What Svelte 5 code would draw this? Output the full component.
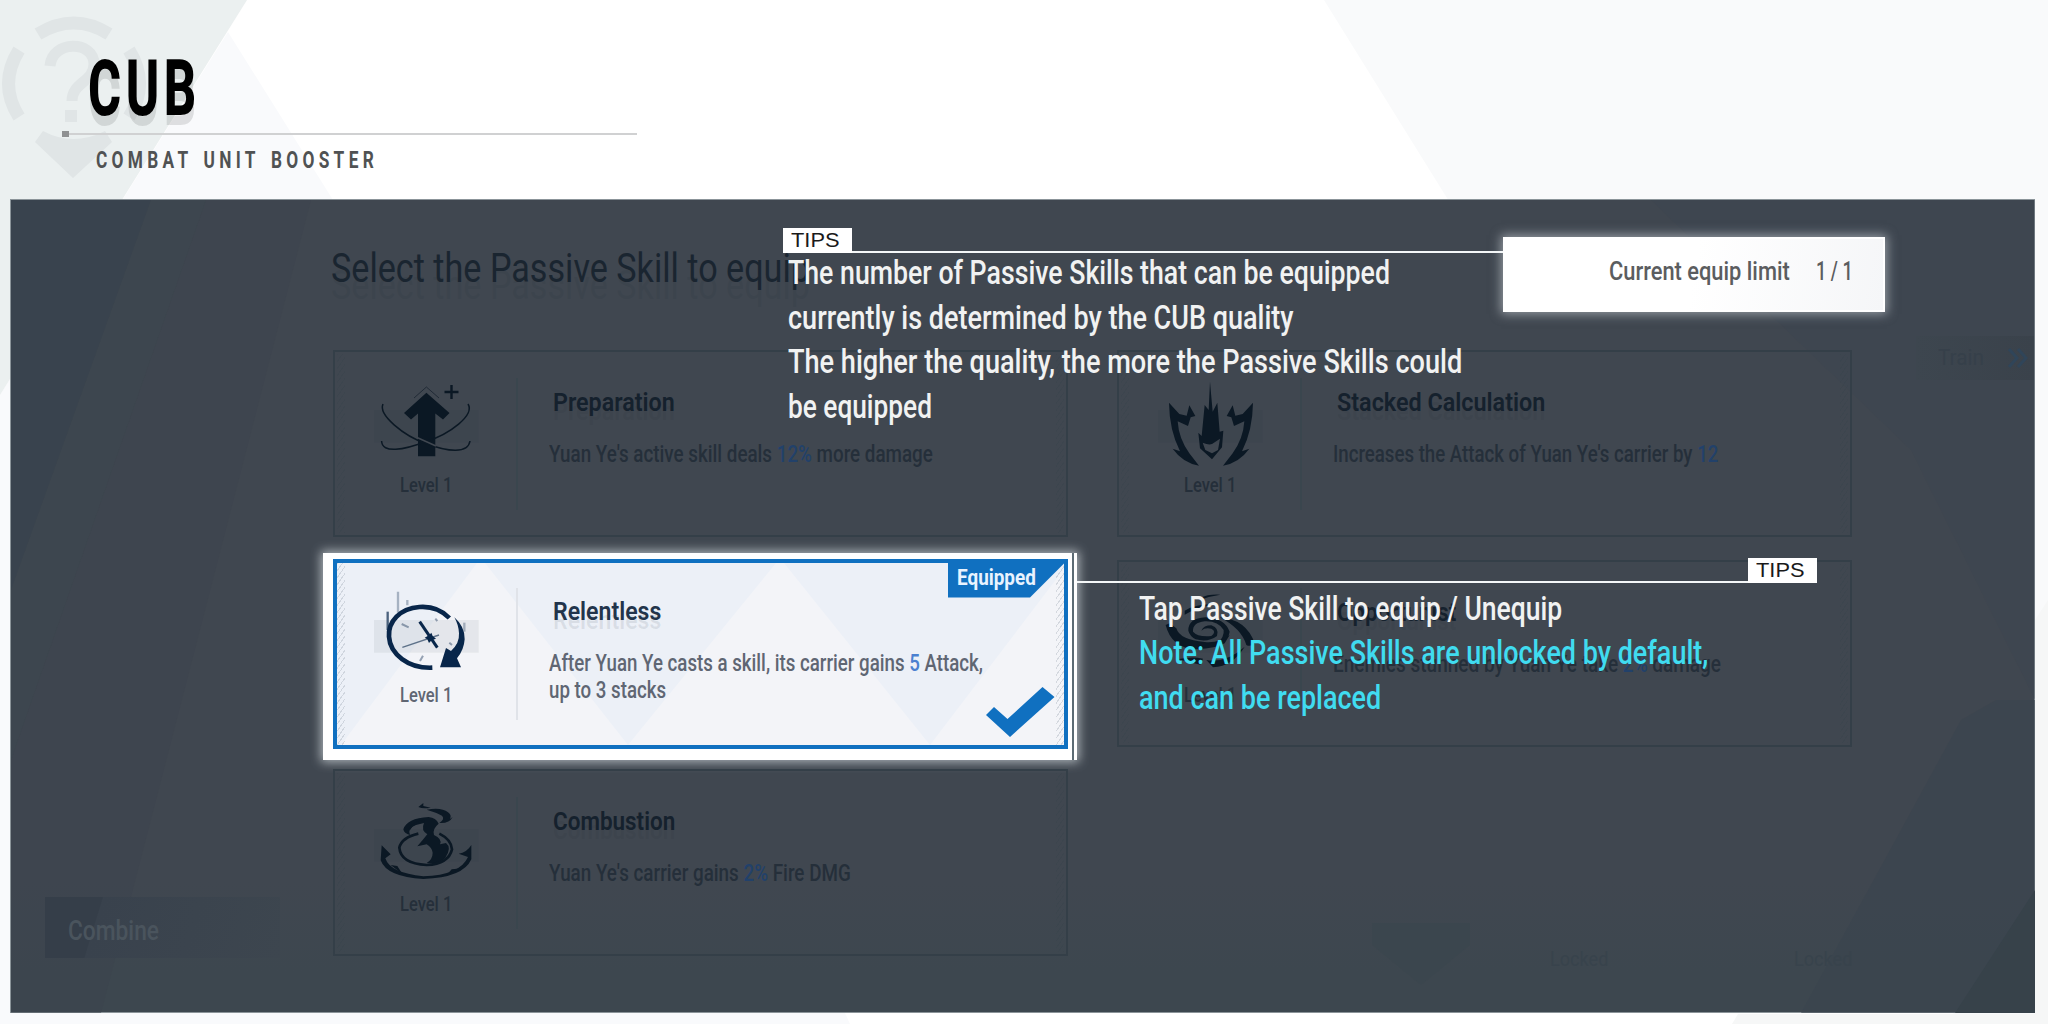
<script>
  const skills = [
    { name: 'Preparation', nameW: 122, icon: 'arrow', lines: [{ w: 384, parts: ["Yuan Ye's active skill deals ", '12%', ' more damage'] }] },
    { name: 'Stacked Calculation', nameW: 208, icon: 'claw', lines: [{ w: 385, parts: ["Increases the Attack of Yuan Ye's carrier by ", '12', ''] }] },
    {
      name: 'Relentless', nameW: 108, icon: 'clock', active: true,
      lines: [
        { w: 434, parts: ['After Yuan Ye casts a skill, its carrier gains ', '5', ' Attack,'] },
        { w: 117, parts: ['up to 3 stacks', '', ''] }
      ]
    },
    { name: 'Opportunist', nameW: 119, icon: 'swirl', lines: [{ w: 388, parts: ['Enemies stunned by Yuan Ye take ', '2%', ' damage'] }] },
    { name: 'Combustion', nameW: 122, icon: 'flame', lines: [{ w: 302, parts: ["Yuan Ye's carrier gains ", '2%', ' Fire DMG'] }] }
  ];

  const limitTip = [
    { w: 602, text: 'The number of Passive Skills that can be equipped' },
    { w: 506, text: 'currently is determined by the CUB quality' },
    { w: 674, text: 'The higher the quality, the more the Passive Skills could' },
    { w: 144, text: 'be equipped' }
  ];
  const tapTip = [
    { w: 423, text: 'Tap Passive Skill to equip / Unequip' },
    { w: 569, text: 'Note: All Passive Skills are unlocked by default,', note: true },
    { w: 242, text: 'and can be replaced', note: true }
  ];

  // Condenses a label horizontally to the given width.
  function fit(node, width) {
    node.style.transform = `scaleX(${width / node.offsetWidth})`;
  }
</script>

{#snippet icon(kind)}
  <svg class="icon" viewBox="0 0 420 300" width="140" height="100">
    <rect class="plate" x="42" y="120" width="314" height="98" />
    {#if kind === 'arrow'}
      <g transform="scale(3)">
        <path d="M66.4 22.8 89.5 43 83 49.5 75.3 43.5V86.2H58V43.5L51 49.5 44 43Z" />
        <path class="line" stroke-width="1" d="M54 28 66.4 17 79 28" opacity=".6" />
        <path class="line" stroke-width="2.4" d="M91.500 15v14M84.500 22h14" />
        <path class="line" stroke-width="1.5" d="M23 34C18 45 44 66 66 73.500C88 82 108 84 110 71M108 34C115 45 90 64 66 71.500C44 80 22 84 21.600 71" />
        <path class="cut" d="M57 67.500 76 76" />
      </g>
    {:else if kind === 'claw'}
      <g transform="translate(-42 0)">
        <path fill-rule="evenodd" d="M240 35 248 125 262 98 269 185 280 182 276 232 246 268 210 235 205 188 215 198 224 105 236 120ZM218 218Q236 226 246 222L270 206 264 240 246 250 226 240Z" />
        <path d="M117 98 148 132 170 137 178 106 196 138 182 142 174 168 143 154Q146 205 178 250L207 287Q158 278 128 236L150 244Q118 180 117 98Z" />
        <path transform="translate(486 0) scale(-1 1)" d="M117 98 148 132 170 137 178 106 196 138 182 142 174 168 143 154Q146 205 178 250L207 287Q158 278 128 236L150 244Q118 180 117 98Z" />
      </g>
    {:else if kind === 'clock'}
      <g class="faint">
        <path class="line" stroke-width="7" d="M114 35V98M142 60V76" />
        <path class="line" stroke-width="7" d="M313 128V155" />
      </g>
      <path class="line" stroke-width="7" d="M83 95V150" opacity=".7" />
      <path class="line" stroke-width="14" d="M268 114C240 85 205 79 178 81C120 85 84 125 87 170C90 222 145 266 217 263" />
      <path d="M283 112Q315 140 314 178Q312 210 291 235L303 262H240L258 204 273 213Q299 190 297 160Q296 135 283 112Z" />
      <path class="line" stroke-width="9" d="M179 125 232 203" />
      <path d="M194 173 207 166 214 158 218 168 228 176 215 181 207 189 202 178Z" />
      <path class="line" stroke-width="4" d="M127 202 237 165" opacity=".6" />
      <path class="line" stroke-width="6" d="M125 132 146 142M189 227 180 243M226 116 232 123M268 188 276 195" opacity=".4" />
    {:else if kind === 'swirl'}
      <g transform="translate(-43 0)">
        <path d="M108 135Q125 205 200 208Q260 205 285 190L300 165Q270 190 225 186Q150 180 140 145L120 130Z" />
        <path d="M176 152Q175 115 228 112Q285 115 300 155Q298 180 262 192Q285 170 282 150Q265 122 225 124Q188 128 190 155Q205 172 245 168Q262 155 245 146Q225 142 215 152Q222 136 245 136Q270 145 262 168Q235 188 198 178Q180 168 176 152Z" />
        <path d="M270 112Q350 118 375 190 362 202 350 195Q335 145 270 112Z" />
        <path d="M165 92Q200 70 262 72Q205 80 165 104ZM212 54Q235 42 272 44Q240 48 212 60Z" />
        <path d="M145 238Q185 228 220 236L212 254ZM230 240Q290 250 345 200Q310 258 250 262Z" />
      </g>
    {:else}
      <g transform="translate(0 16)">
        <path d="M175 38 190 26V35L212 40Q190 45 175 38ZM200 46Q245 38 264 54Q276 62 270 74L278 68Q268 88 238 86Q256 74 246 64Q228 54 200 46Z" />
        <path d="M206 68Q140 72 130 105Q132 118 150 122Q142 100 168 92L192 86Q182 108 202 120Q190 135 172 156L200 150Q216 160 218 175Q218 195 200 206Q235 212 256 190Q276 160 258 146L240 150Q248 134 222 122Q216 104 236 88Q228 70 206 68Z" />
        <path class="line" stroke-width="8" d="M175 118Q125 130 118 160Q122 208 200 212Q266 208 276 165Q274 136 238 118" />
        <path class="line" stroke-width="5" d="M194 78Q158 84 148 106" />
        <path d="M65 153 92 180 76 192Q90 236 190 246Q300 242 324 188L296 178Q320 175 334 152V195Q310 250 190 254Q80 248 62 198Z" />
        <path d="M92 212 112 215 128 240ZM262 240 275 225 308 222Z" />
      </g>
    {/if}
  </svg>
{/snippet}

<div class="page">
  <svg class="backdrop" viewBox="0 0 2048 1024" width="2048" height="1024">
    <path fill="#f9fafc" d="M228 32 333 200V1024H0V395Z" />
    <path fill="#ebf0f0" d="M0 0H247L0 395Z" />
    <path fill="#f9fafb" d="M1324 0H2048V1024H1960Z" />
    <path fill="#f9fafc" d="M0 1013H845L850 1024H0Z" />
    <path fill="#f6f7f7" d="M2035 620 2048 600V1024H1732L1738 1014H2035Z" />
    <g fill="none" stroke="#e0e5e6" stroke-width="13">
      <path d="M38 34Q74 12 109 34" />
      <path d="M19 50Q-2 84 19 117M129 50Q150 84 129 117" />
      <path d="M50 66C52 40 94 40 94 64C94 82 72 82 72 101" stroke-width="11" />
    </g>
    <path fill="#e0e5e6" d="M65 110H77V122H65ZM43 131Q73 147 105 131L112 142 73 178 35 142Z" />
  </svg>

  <header>
    <h1><span class="fit" use:fit={113}>CUB</span></h1>
    <div class="rule"><i></i></div>
    <p><span class="fit" use:fit={282}>COMBAT UNIT BOOSTER</span></p>
  </header>

  <main>
    <svg class="facets" viewBox="0 0 2024 813" width="2024" height="813">
      <path fill="#35414c" opacity=".6" d="M0 0H140L0 390Z" />
      <path fill="#39464e" opacity=".5" d="M140 0H195L0 560V390Z" />
      <path fill="#3c444e" opacity=".5" d="M195 0H300L90 813H0V560Z" />
      <path fill="#3b464f" opacity=".35" d="M1640 0H2024V500L1900 250Z" />
      <path fill="#3b454e" opacity=".6" d="M1950 520 1985 500H2024V813H1790Z" />
      <path fill="#37424a" d="M2024 690V813H1944Z" />
      <path fill="#3b464e" opacity=".8" d="M1361 723H1459V745L1410 785 1361 745Z" />
    </svg>

    <h2><span class="fit" use:fit={479}>Select the Passive Skill to equip</span></h2>

    <section class="grid">
      {#each skills as skill}
        <article class="card" class:active={skill.active}>
          {#if skill.active}
            <svg class="pattern" viewBox="0 0 735 190" width="735" height="190">
              <path fill="#f3f4f8" d="M144 4H152L295 186H8ZM443 4H451L597 186H295ZM731 10V186H597Z" />
            </svg>
          {/if}
          <i class="hatch"></i>
          <div class="badge">
            {@render icon(skill.icon)}
            <div class="level"><span class="fit" use:fit={52}>Level 1</span></div>
          </div>
          <div class="body">
            <h3><span class="fit" use:fit={skill.nameW}>{skill.name}</span></h3>
            {#each skill.lines as line}
              <div class="desc"><span class="fit" use:fit={line.w}>{line.parts[0]}<b>{line.parts[1]}</b>{line.parts[2]}</span></div>
            {/each}
          </div>
          <i class="hatch right"></i>
          {#if skill.active}
            <div class="tag"><span class="fit" use:fit={79}>Equipped</span></div>
            <svg class="check" viewBox="0 0 70 52" width="70" height="52">
              <path d="M0 29 8 21 21.500 33 56.500 1 68.500 11 24 51Z" />
            </svg>
          {/if}
        </article>
      {/each}
    </section>

    <div class="combine"><span class="fit" use:fit={91}>Combine</span></div>
    <div class="train">
      <span class="fit" use:fit={46}>Train</span>
      <svg viewBox="0 0 20 20" width="20" height="20"><path d="M1 1 9 10 1 19M10 1 18 10 10 19" /></svg>
    </div>
    <div class="locked one"><span class="fit" use:fit={58}>Locked</span></div>
    <div class="locked two"><span class="fit" use:fit={58}>Locked</span></div>

    <div class="limit">
      <div class="label"><span class="fit" use:fit={181}>Current equip limit</span></div>
      <div class="count"><span class="fit" use:fit={37}>1 / 1</span></div>
    </div>

    <aside class="tip first">
      <div class="bar"><div class="chip"><span class="fit" use:fit={48}>TIPS</span></div><i></i></div>
      {#each limitTip as line}
        <div class="row"><span class="fit" use:fit={line.w}>{line.text}</span></div>
      {/each}
    </aside>

    <aside class="tip second">
      <div class="bar"><i></i><div class="chip"><span class="fit" use:fit={48}>TIPS</span></div></div>
      {#each tapTip as line}
        <div class="row" class:note={line.note}><span class="fit" use:fit={line.w}>{line.text}</span></div>
      {/each}
    </aside>
  </main>
</div>

<style>
  :global(body) { background: #fff; }
  .page {
    position: relative;
    width: 2048px;
    height: 1024px;
    overflow: hidden;
    background: #fff;
    font-family: Roboto, 'Liberation Sans', sans-serif;
  }
  .backdrop, .facets { position: absolute; left: 0; top: 0; }
  h1, h2, h3, p { margin: 0; font-weight: 400; }
  .fit { display: inline-block; white-space: nowrap; transform-origin: 0 50%; }

  header { position: relative; height: 200px; box-sizing: border-box; padding-top: 48px; }
  h1 {
    height: 82px;
    padding-left: 88px;
    color: #000;
    font-size: 78px;
    font-weight: 800;
    line-height: 82px;
    letter-spacing: 7px;
    text-shadow: 0 10px 0 rgba(60, 60, 60, .14);
  }
  .rule { width: 575px; height: 2px; margin: 3px 0 0 62px; background: #d0d1d2; }
  .rule i { display: block; width: 7px; height: 6px; background: #8f9192; transform: translateY(-2px); }
  header p {
    padding: 13px 0 0 96px;
    color: #505253;
    font-size: 24px;
    font-weight: 700;
    line-height: 25px;
    letter-spacing: 6px;
    word-spacing: 4px;
  }

  main {
    position: relative;
    width: 2023px;
    height: 812px;
    margin-left: 11px;
    box-sizing: border-box;
    padding-left: 322px;
    background: linear-gradient(#404750 0 84%, #3d474f 95%);
    box-shadow: 0 0 0 1px #8b9499;
  }
  h2 {
    position: relative;
    height: 112px;
    padding-top: 38px;
    color: #1a2530;
    font-size: 41.500px;
    line-height: 60px;
    text-shadow: 0 17px 0 rgba(45, 58, 65, .2);
  }
  h2 .fit { margin-left: -2px; }
  .grid {
    position: relative;
    z-index: 0;
    display: grid;
    grid-template-columns: 735px 735px;
    grid-auto-rows: 186px;
    gap: 23.500px 49px;
  }
  .card {
    position: relative;
    display: flex;
    box-sizing: border-box;
    height: 187px;
    color: #252f3a;
    outline: 2px solid #343f48;
    outline-offset: -2px;
  }
  .hatch {
    position: absolute;
    left: 4px;
    top: 4px;
    bottom: 4px;
    width: 8px;
    opacity: .3;
    background: repeating-linear-gradient(125deg, #35424a 0 1px, transparent 1px 4px);
  }
  .hatch.right { left: auto; right: 4px; }
  .badge {
    flex: none;
    width: 185px;
    height: 132px;
    margin-top: 28px;
    border-right: 2px solid #3a464e;
    box-sizing: border-box;
  }
  .icon { display: block; margin: -8px 0 0 27px; fill: #0b1824; overflow: visible; }
  .icon .line { fill: none; stroke: #0b1824; }
  .icon .cut { fill: none; stroke: #404750; stroke-width: 1.500; }
  .icon .plate { fill: #39434c; opacity: .3; }
  .icon .faint { opacity: .3; }
  .level { margin: 3px 0 0 67px; font-size: 20px; font-weight: 500; line-height: 24px; }
  .body { flex: none; width: 540px; padding: 36px 0 0 31px; box-sizing: border-box; }
  h3 {
    height: 55px;
    padding-left: 4px;
    color: #15212d;
    font-size: 26.500px;
    font-weight: 600;
    line-height: 31px;
    text-shadow: 0 9px 0 rgba(40, 52, 60, .15);
  }
  .desc { font-size: 23px; font-weight: 500; line-height: 27px; }
  .desc b { color: #22416a; font-weight: 500; }

  .active { height: 190px; margin-top: -1px; background: #ecf0f7; color: #5f6673; outline: none; box-shadow: inset 0 0 0 4px #1070c0; }
  .active::before {
    content: '';
    position: absolute;
    left: -10px;
    top: -6px;
    width: 754px;
    height: 207px;
    z-index: -1;
    background: linear-gradient(90deg, transparent 749px, #5c6b74 749px 751px, transparent 751px), #fff;
    box-shadow: 0 0 10px 2px rgba(235, 242, 246, .65);
  }
  .active .pattern { position: absolute; left: 0; top: 0; }
  .active .badge { position: relative; margin-top: 29px; border-color: #e0e3e9; }
  .active .body { position: relative; padding-top: 36px; }
  .active h3 { color: #22344b; text-shadow: 0 9px 0 rgba(80, 95, 110, .12); }
  .active .desc b { color: #4a80d0; }
  .active .icon { fill: #08264a; }
  .active .icon .line { stroke: #08264a; }
  .active .icon .plate { fill: #8e9399; opacity: .14; }
  .active .hatch { background: repeating-linear-gradient(125deg, #8d98a5 0 1px, transparent 1px 4px); }
  .tag {
    position: absolute;
    left: 615px;
    top: 0;
    width: 118px;
    height: 39px;
    box-sizing: border-box;
    padding-left: 9px;
    background: #1070c0;
    clip-path: polygon(0 0, 100% 0, 100% 3px, 82px 100%, 0 100%);
    color: #e9f3ff;
    font-size: 22.500px;
    font-weight: 700;
    line-height: 37px;
  }
  .check { position: absolute; left: 653px; top: 127px; fill: #1070c0; }

  .combine, .train, .locked { position: absolute; white-space: nowrap; }
  .combine {
    left: 34px;
    top: 697px;
    width: 235px;
    height: 61px;
    box-sizing: border-box;
    padding-left: 23px;
    background: linear-gradient(107deg, #353e49 0 55px, #39424d 56px, #3d464f);
    color: #4a545d;
    font-size: 27px;
    font-weight: 500;
    line-height: 69px;
  }
  .train {
    left: 1905px;
    top: 136px;
    width: 118px;
    height: 44px;
    box-sizing: border-box;
    display: grid;
    grid-template-columns: 70px 20px;
    align-items: center;
    padding-left: 22px;
    background: linear-gradient(90deg, #3d464f, #3a424b);
    color: #36404a;
    font-size: 22px;
    line-height: 44px;
  }
  .train .fit { justify-self: start; }
  .train svg { fill: none; stroke: #304559; stroke-width: 3; }
  .locked { top: 747px; color: #38434c; font-size: 20px; line-height: 24px; }
  .one { left: 1539px; }
  .two { left: 1783px; }

  .limit {
    position: absolute;
    left: 1492px;
    top: 37px;
    width: 382px;
    height: 75px;
    box-sizing: border-box;
    display: grid;
    grid-template-columns: 207px 37px;
    padding: 17px 0 0 104px;
    border: 2px solid #fff;
    background: linear-gradient(100deg, #fff 50%, #f5f6f8);
    box-shadow: 0 0 10px 2px rgba(235, 242, 246, .5);
    color: #5b5d5f;
    font-size: 25px;
    font-weight: 500;
    line-height: 32px;
  }
  .label, .count { min-width: 0; }

  .tip { position: absolute; color: #f1f2f2; font-size: 33px; font-weight: 500; line-height: 44.500px; }
  .bar { display: flex; align-items: flex-end; }
  .bar i { flex: 1; height: 2.500px; background: #f4f7f8; }
  .chip {
    width: 69px;
    height: 25px;
    box-sizing: border-box;
    padding-left: 8px;
    background: #fff;
    color: #1a1a1a;
    font: 20px/25px 'Liberation Sans', Arial, sans-serif;
  }
  .row { height: 44.500px; padding-left: 5px; }
  .first { left: 772px; top: 28px; width: 720px; }
  .first .bar { margin-bottom: -2px; }
  .second { left: 1066px; top: 358px; width: 740px; }
  .second .bar { margin-bottom: 3.500px; }
  .second .row { padding-left: 62px; }
  .note { color: #40dcf0; }
</style>
